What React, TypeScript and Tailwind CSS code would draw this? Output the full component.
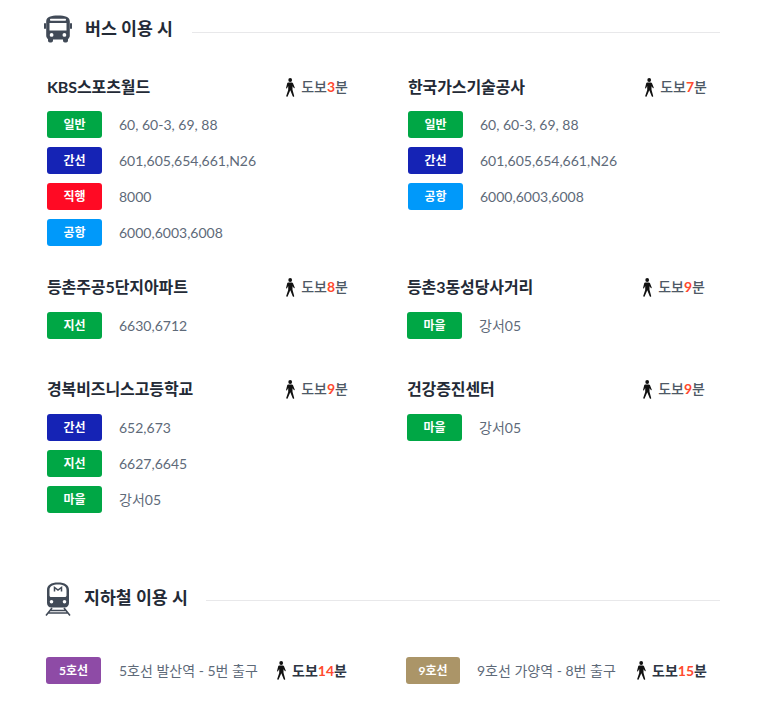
import React from "react";

function BusIcon() {
  return (
    <svg width="28" height="29" viewBox="0 0 28 29" className="shrink-0">
      <path fill="#414a57" fillRule="evenodd" d="M4 25.500V24c-1-.8-1.800-2-1.800-3.600V6.500C2.200 2 7 .6 14 .6s11.800 1.400 11.800 5.900v13.900c0 1.600-.8 2.800-1.800 3.600v1.500c0 1.200-.8 2-1.800 2h-1.400c-1 0-1.800-.8-1.800-2v-1H9v1c0 1.200-.8 2-1.800 2H5.800C4.800 27.500 4 26.700 4 25.500ZM7 3.800h14c.6 0 1 .4 1 1s-.4 1-1 1H7c-.6 0-1-.4-1-1s.4-1 1-1ZM5.500 8h17v7.600h-17V8ZM7.600 18a1.900 1.900 0 1 0 0 3.800 1.900 1.900 0 0 0 0-3.800Zm12.800 0a1.900 1.900 0 1 0 0 3.800 1.900 1.900 0 0 0 0-3.800Z" />
      <rect x="0" y="8" width="2" height="6" rx="1" fill="#414a57" />
      <rect x="26" y="8" width="2" height="6" rx="1" fill="#414a57" />
    </svg>
  );
}

function MetroIcon() {
  return (
    <svg width="26" height="34" viewBox="0 0 26 34" className="shrink-0">
      <path fill="#414a57" fillRule="evenodd" d="M13 .5c7 0 11 2.500 11 7.500v13c0 2.500-1.800 4.500-4.500 4.500h-13C3.800 25.500 2 23.500 2 21V8C2 3 6 .5 13 .5ZM13 2.500C8 2.500 4.500 4 4.500 8v5.500c0 .8.700 1.500 1.500 1.500h14c.8 0 1.500-.7 1.500-1.500V8c0-4-3.500-5.500-8.500-5.500ZM6.500 18a1.800 1.800 0 1 0 0 3.600 1.800 1.800 0 0 0 0-3.600Zm13 0a1.800 1.800 0 1 0 0 3.600 1.800 1.800 0 0 0 0-3.600Z" />
      <path fill="none" stroke="#414a57" strokeWidth="1.500" d="M9.500 9.500V5.500l3.500 2.500 3.500-2.500v4" />
      <path fill="none" stroke="#414a57" strokeWidth="1.600" d="M7 26 1 33.500M19 26l6 7.500M5.500 28.500h15M3.500 31h19" />
    </svg>
  );
}

function Walker() {
  return (
    <svg width="10" height="19" viewBox="0 0 10 19" className="shrink-0">
      <circle cx="5.200" cy="2" r="1.900" fill="#111" />
      <path fill="#111" d="M3.200 4.500h3.600c.6 0 1 .3 1.200.8l1.700 4.300c.2.500-.5.800-.8.400L7.500 8.300v3.400l1.700 6.300c.2.800-1.300 1.100-1.500.3L5.300 12.200 2.600 18.500c-.3.700-1.700.2-1.400-.6l2-6V8L2 10.200c-.3.500-1.100.2-.9-.4L2.200 5.200c.1-.4.500-.7 1-.7Z" />
    </svg>
  );
}

function Walk({ min, strong }: { min: string; strong?: boolean }) {
  return (
    <div className="flex items-center shrink-0 gap-[6px]">
      <Walker />
      <span className={strong ? "text-[14px] font-bold text-[#2d3542] leading-none" : "text-[14px] font-medium text-[#4e5966] leading-none"}>
        도보<span className="font-bold text-[#ff4a2e]">{min}</span>분
      </span>
    </div>
  );
}

function Badge({ label, bg }: { label: string; bg: string }) {
  return (
    <span className={`flex h-[27px] w-[55px] shrink-0 items-center justify-center rounded-[3px] text-[12px] font-bold text-white ${bg}`}>
      {label}
    </span>
  );
}

type Line = { label: string; bg: string; text: string };

const GREEN = "bg-[#00a745]";
const BLUE = "bg-[#1523b5]";
const RED = "bg-[#ff0a24]";
const SKY = "bg-[#0099fa]";

function Stop({ name, min, lines, gap, right, nudge }: { name: string; min: string; lines: Line[]; gap: string; right: string; nudge?: string }) {
  return (
    <div className={`flex flex-col ${nudge ?? ""}`}>
      <div className={`flex h-7 items-center justify-between ${right} ${gap}`}>
        <h3 className="text-[16px] font-bold tracking-[-0.1px] text-[#232a36]">{name}</h3>
        <Walk min={min} />
      </div>
      <ul className="flex flex-col gap-[9px]">
        {lines.map((l) => (
          <li key={l.label} className="flex items-center gap-[17px]">
            <Badge label={l.label} bg={l.bg} />
            <span className="text-[14px] text-[#5e6a79]">{l.text}</span>
          </li>
        ))}
      </ul>
    </div>
  );
}

function SectionTitle({ icon, title, gap }: { icon: React.ReactNode; title: string; gap: string }) {
  return (
    <div className="flex items-center">
      {icon}
      <h2 className="mb-[2px] text-[17.300px] font-bold text-[#232a36] whitespace-nowrap">{title}</h2>
      <div className={`h-px flex-1 bg-[#e8e8ea] ${gap}`} />
    </div>
  );
}

export default function App() {
  return (
    <div className="min-h-[717px] w-[766px] bg-white pl-[44px] pr-[46px] pt-[15px] font-['Lato','Noto_Sans_CJK_KR',sans-serif]">
      <SectionTitle
        icon={<span className="mr-[13px] mb-[1px]"><BusIcon /></span>}
        title="버스 이용 시"
        gap="ml-[19px] mt-[5px]"
      />

      <div className="mt-[28px] grid grid-cols-[301px_300px] gap-x-[59px] pl-[3px]">
        <div className="flex flex-col">
          <Stop
            name="KBS스포츠월드"
            min="3"
            gap="mb-[10px]"
            right=""
            lines={[
              { label: "일반", bg: GREEN, text: "60, 60-3, 69, 88" },
              { label: "간선", bg: BLUE, text: "601,605,654,661,N26" },
              { label: "직행", bg: RED, text: "8000" },
              { label: "공항", bg: SKY, text: "6000,6003,6008" },
            ]}
          />
          <div className="mt-[27px]">
            <Stop name="등촌주공5단지아파트" min="8" gap="mb-[11px]" right="" lines={[{ label: "지선", bg: GREEN, text: "6630,6712" }]} />
          </div>
          <div className="mt-[36px]">
            <Stop
              name="경복비즈니스고등학교"
              min="9"
              gap="mb-[11px]"
              right=""
              lines={[
                { label: "간선", bg: BLUE, text: "652,673" },
                { label: "지선", bg: GREEN, text: "6627,6645" },
                { label: "마을", bg: GREEN, text: "강서05" },
              ]}
            />
          </div>
        </div>

        <div className="flex flex-col">
          <Stop
            name="한국가스기술공사"
            min="7"
            gap="mb-[10px]"
            right=""
            nudge="ml-px"
            lines={[
              { label: "일반", bg: GREEN, text: "60, 60-3, 69, 88" },
              { label: "간선", bg: BLUE, text: "601,605,654,661,N26" },
              { label: "공항", bg: SKY, text: "6000,6003,6008" },
            ]}
          />
          <div className="mt-[63px]">
            <Stop name="등촌3동성당사거리" min="9" gap="mb-[11px]" right="pr-[2px]" lines={[{ label: "마을", bg: GREEN, text: "강서05" }]} />
          </div>
          <div className="mt-[36px]">
            <Stop name="건강증진센터" min="9" gap="mb-[11px]" right="pr-[2px]" lines={[{ label: "마을", bg: GREEN, text: "강서05" }]} />
          </div>
        </div>
      </div>

      <div className="mt-[69px] pl-px">
        <SectionTitle
          icon={<span className="mr-[13px]"><MetroIcon /></span>}
          title="지하철 이용 시"
          gap="ml-[18px] mt-[2px]"
        />
      </div>

      <div className="mt-[41px] flex pl-[2px]">
        <div className="flex w-[360px] items-center">
          <span className="flex h-[27px] w-[55px] items-center justify-center rounded-[3px] bg-[#8e4ba6] text-[12px] font-bold text-white">5호선</span>
          <span className="ml-[18px] w-[157px] text-[14px] text-[#5e6a79] whitespace-nowrap">5호선 발산역 - 5번 출구</span>
          <Walk min="14" strong />
        </div>
        <div className="flex items-center">
          <span className="flex h-[27px] w-[54px] items-center justify-center rounded-[3px] bg-[#ab9568] text-[12px] font-bold text-white">9호선</span>
          <span className="ml-[17px] w-[159px] text-[14px] text-[#5e6a79] whitespace-nowrap">9호선 가양역 - 8번 출구</span>
          <Walk min="15" strong />
        </div>
      </div>
    </div>
  );
}
